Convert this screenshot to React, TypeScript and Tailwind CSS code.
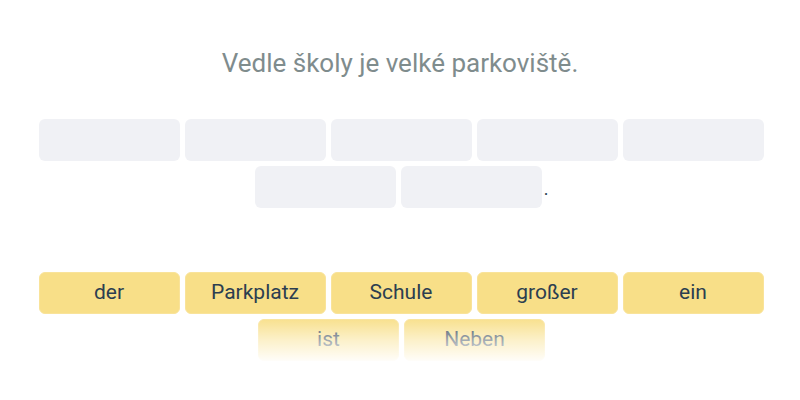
import { useState } from 'react'

type Tile = {
  id: number
  word: string
}

const sentence = 'Vedle školy je velké parkoviště.'

const bank: Tile[] = [
  { id: 1, word: 'der' },
  { id: 2, word: 'Parkplatz' },
  { id: 3, word: 'Schule' },
  { id: 4, word: 'großer' },
  { id: 5, word: 'ein' },
  { id: 6, word: 'ist' },
  { id: 7, word: 'Neben' },
]

const SLOTS = 7

const Slot = () => (
  <div className="h-[42px] w-[141px] rounded-[6px] bg-[#f0f1f5]" />
)

const WordTile = ({ tile, onPick }: { tile: Tile; onPick: (t: Tile) => void }) => (
  <button
    className="flex h-[42px] w-[141px] cursor-pointer items-center justify-center rounded-[6px] border border-[#f9e39a] bg-[#f8df88] text-[21px] text-[#2c3e50]"
    onClick={() => onPick(tile)}
  >
    {tile.word}
  </button>
)

const App = () => {
  const [picked, setPicked] = useState<Tile[]>([])
  const pick = (t: Tile) => setPicked([...picked, t])
  const left = bank.filter((t) => !picked.some((p) => p.id === t.id))

  return (
    <div
      className="flex h-[400px] w-[800px] flex-col items-center bg-white pl-[2px] pt-[47px]"
      style={{ fontFamily: 'Roboto, "Noto Sans", sans-serif' }}
    >
      <h1 className="-ml-[2px] text-[26px] leading-[32px] text-[#7f8c8d]">{sentence}</h1>

      {/* answer slots */}
      <div className="mt-[40px] flex w-[725px] flex-col items-center gap-[5px]">
        <div className="flex gap-[5px]">
          {Array.from({ length: 5 }).map((_, i) => (
            <Slot key={i} />
          ))}
        </div>
        <div className="flex items-end gap-[5px] pl-[1px]">
          {Array.from({ length: SLOTS - 5 }).map((_, i) => (
            <Slot key={i} />
          ))}
          <span className="mb-[10px] -ml-[3px] text-[18px] leading-none text-[#2c3e50]">.</span>
        </div>
      </div>

      {/* word bank */}
      <div className="relative mt-[64px] flex w-[725px] flex-col items-center gap-[5px]">
        <div className="flex gap-[5px]">
          {left.slice(0, 5).map((t) => (
            <WordTile key={t.id} tile={t} onPick={pick} />
          ))}
        </div>
        <div className="flex gap-[5px] pl-[1px]">
          {left.slice(5).map((t) => (
            <WordTile key={t.id} tile={t} onPick={pick} />
          ))}
        </div>
        <div className="pointer-events-none absolute inset-x-0 bottom-0 h-[42px] bg-gradient-to-b from-white/5 via-white/55 to-white/95" />
      </div>
    </div>
  )
}

export default App
